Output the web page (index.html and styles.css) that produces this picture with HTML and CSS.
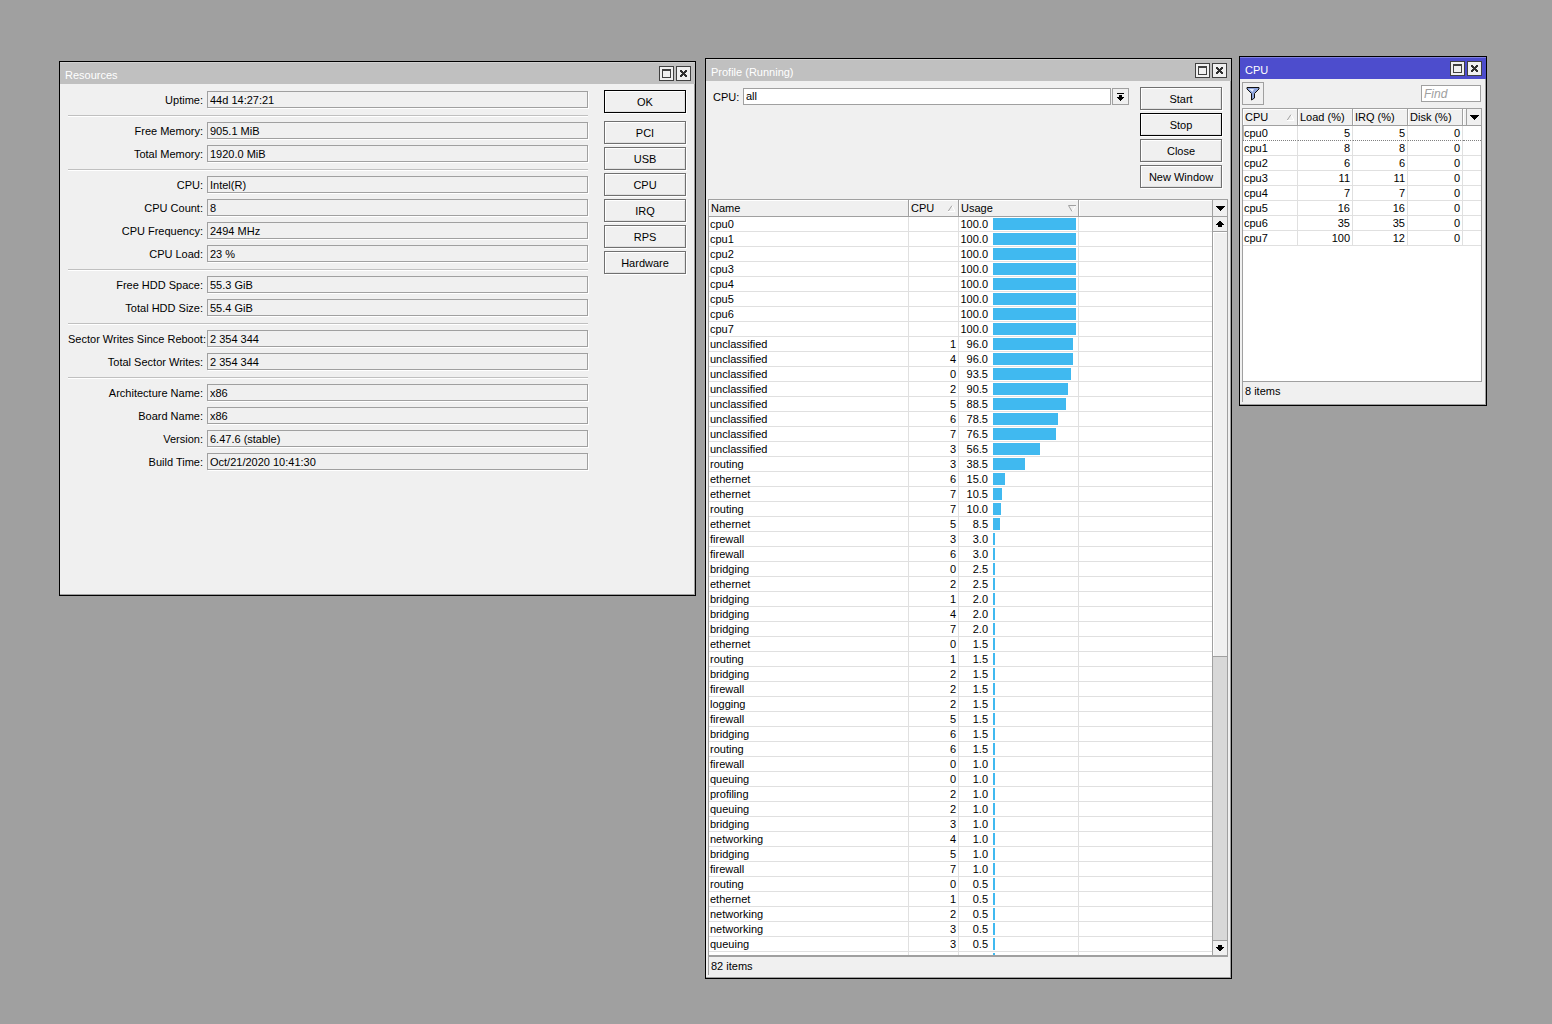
FILE: index.html
```html
<!DOCTYPE html>
<html lang="en">
<head>
<meta charset="utf-8">
<title>Router resources</title>
<link rel="stylesheet" href="styles.css">
</head>
<body>
<svg class="defs" aria-hidden="true">
  <symbol id="i-max" viewBox="0 0 13 13"><path d="M2 2h9v9H2z M3 4v6h7V4z" fill="#404040" fill-rule="evenodd"/></symbol>
  <symbol id="i-close" viewBox="0 0 13 13"><path d="M3 3h2v1h1v1h1V4h1V3h2v2H9v1H8v1h1v1h1v2H8V9H7V8H6v1H5v1H3V8h1V7h1V6H4V5H3z" fill="#303030"/></symbol>
  <symbol id="i-down" viewBox="0 0 9 5"><path d="M0 0h9v1H8v1H7v1H6v1H5v1H4V4H3V3H2V2H1V1H0z"/></symbol>
  <symbol id="i-combo" viewBox="0 0 7 8"><path d="M0 0h7v1H0z M2 2h3v2h2v1H6v1H5v1H4v1H3V7H2V6H1V5H0V4h2z"/></symbol>
  <symbol id="i-arrow" viewBox="0 0 8 6"><path d="M3 0h2v1h1v1h1v1h1v1H6v2H2V4H0V3h1V2h1V1h1z"/></symbol>
</svg>
<main class="desktop">
  <section class="window resources">
    <header class="titlebar">
      <h2>Resources</h2>
      <button class="tb" aria-label="Maximize"><svg><use href="#i-max"/></svg></button>
      <button class="tb" aria-label="Close"><svg><use href="#i-close"/></svg></button>
    </header>
    <div class="res-body">
      <form class="fields">
        <label for="f1">Uptime:</label><input id="f1" readonly value="44d 14:27:21">
        <hr>
        <label for="f2">Free Memory:</label><input id="f2" readonly value="905.1 MiB">
        <label for="f3">Total Memory:</label><input id="f3" readonly value="1920.0 MiB">
        <hr>
        <label for="f4">CPU:</label><input id="f4" readonly value="Intel(R)">
        <label for="f5">CPU Count:</label><input id="f5" readonly value="8">
        <label for="f6">CPU Frequency:</label><input id="f6" readonly value="2494 MHz">
        <label for="f7">CPU Load:</label><input id="f7" readonly value="23 %">
        <hr>
        <label for="f8">Free HDD Space:</label><input id="f8" readonly value="55.3 GiB">
        <label for="f9">Total HDD Size:</label><input id="f9" readonly value="55.4 GiB">
        <hr>
        <label for="f10">Sector Writes Since Reboot:</label><input id="f10" readonly value="2 354 344">
        <label for="f11">Total Sector Writes:</label><input id="f11" readonly value="2 354 344">
        <hr>
        <label for="f12">Architecture Name:</label><input id="f12" readonly value="x86">
        <label for="f13">Board Name:</label><input id="f13" readonly value="x86">
        <label for="f14">Version:</label><input id="f14" readonly value="6.47.6 (stable)">
        <label for="f15">Build Time:</label><input id="f15" readonly value="Oct/21/2020 10:41:30">
      </form>
      <div class="buttons">
        <button class="btn default spaced">OK</button>
        <button class="btn">PCI</button>
        <button class="btn">USB</button>
        <button class="btn">CPU</button>
        <button class="btn">IRQ</button>
        <button class="btn">RPS</button>
        <button class="btn">Hardware</button>
      </div>
    </div>
  </section>

  <section class="window profile">
    <header class="titlebar">
      <h2>Profile (Running)</h2>
      <button class="tb" aria-label="Maximize"><svg><use href="#i-max"/></svg></button>
      <button class="tb" aria-label="Close"><svg><use href="#i-close"/></svg></button>
    </header>
    <div class="prof-top">
      <div class="combo">
        <label for="cpu">CPU:</label>
        <select id="cpu"><option>all</option></select>
        <button class="drop" aria-label="Open list"><svg><use href="#i-combo"/></svg></button>
      </div>
      <div class="buttons">
        <button class="btn">Start</button>
        <button class="btn default">Stop</button>
        <button class="btn">Close</button>
        <button class="btn">New Window</button>
      </div>
    </div>
    <div class="list">
      <div class="pane">
        <table>
          <colgroup><col class="c-name"><col class="c-cpu"><col class="c-usage"><col></colgroup>
          <thead><tr>
            <th>Name</th>
            <th><span class="sort">CPU <svg class="tri" viewBox="0 0 8 7"><path d="M0 6.5L4 .5" stroke="#a0a0a0"/><path d="M4 .5L7 6.5H0" stroke="#fff" fill="none"/></svg></span></th>
            <th><span class="sort">Usage <svg class="tri" viewBox="0 0 8 7"><path d="M8 .5H.5L4 6.5" stroke="#a0a0a0" fill="none"/><path d="M4 6.5L7.5 1" stroke="#fff"/></svg></span></th>
            <th></th>
          </tr></thead>
          <tbody id="rows"></tbody>
        </table>
      </div>
      <div class="side">
        <button class="cols" aria-label="Columns"><svg><use href="#i-down"/></svg></button>
        <button class="sb" aria-label="Scroll up"><svg><use href="#i-arrow"/></svg></button>
        <div class="track"><div class="thumb"></div></div>
        <button class="sb end" aria-label="Scroll down"><svg class="flip"><use href="#i-arrow"/></svg></button>
      </div>
    </div>
    <footer class="status">82 items</footer>
  </section>

  <section class="window cpu active">
    <header class="titlebar">
      <h2>CPU</h2>
      <button class="tb" aria-label="Maximize"><svg><use href="#i-max"/></svg></button>
      <button class="tb" aria-label="Close"><svg><use href="#i-close"/></svg></button>
    </header>
    <div class="tools">
      <button class="filter" aria-label="Filter"><svg viewBox="0 0 14 15"><path d="M1 1.5h12v1.5L8.500 7.500v4.500L5.500 14V7.500L1 3z" fill="#8ea4dc" stroke="#111"/><path d="M3 3h5L6.500 6z" fill="#e4ecff"/></svg></button>
      <input class="find" placeholder="Find" aria-label="Find">
    </div>
    <div class="list">
      <div class="pane">
        <table>
          <colgroup><col class="c-num"><col class="c-num"><col class="c-num"><col class="c-num"><col></colgroup>
          <thead><tr>
            <th><span class="sort">CPU <svg class="tri" viewBox="0 0 8 7"><path d="M0 6.5L4 .5" stroke="#a0a0a0"/><path d="M4 .5L7 6.5H0" stroke="#fff" fill="none"/></svg></span></th>
            <th>Load (%)</th><th>IRQ (%)</th><th>Disk (%)</th>
            <th class="last"><button class="cols" aria-label="Columns"><svg><use href="#i-down"/></svg></button></th>
          </tr></thead>
          <tbody>
            <tr class="focus"><td>cpu0</td><td>5</td><td>5</td><td>0</td><td></td></tr>
            <tr><td>cpu1</td><td>8</td><td>8</td><td>0</td><td></td></tr>
            <tr><td>cpu2</td><td>6</td><td>6</td><td>0</td><td></td></tr>
            <tr><td>cpu3</td><td>11</td><td>11</td><td>0</td><td></td></tr>
            <tr><td>cpu4</td><td>7</td><td>7</td><td>0</td><td></td></tr>
            <tr><td>cpu5</td><td>16</td><td>16</td><td>0</td><td></td></tr>
            <tr><td>cpu6</td><td>35</td><td>35</td><td>0</td><td></td></tr>
            <tr><td>cpu7</td><td>100</td><td>12</td><td>0</td><td></td></tr>
          </tbody>
        </table>
      </div>
    </div>
    <footer class="status">8 items</footer>
  </section>
</main>
<script src="rows.js"></script>
</body>
</html>
```
FILE: styles.css
```css
* { box-sizing: border-box; }

body {
  margin: 0;
  background: #a0a0a0;
  color: #000;
  font: 11px/14px "Liberation Sans", Arial, sans-serif;
}

button, input, select {
  margin: 0;
  padding: 0;
  border: 1px solid #a0a0a0;
  border-radius: 0;
  background: #f0f0f0;
  color: #000;
  font: inherit;
}

.defs { display: none; }

.desktop {
  display: flex;
  align-items: flex-start;
  min-height: 100vh;
  padding: 56px 65px 45px 59px;
}

.window {
  display: flex;
  flex-direction: column;
  min-width: 0;
  border: 1px solid #000;
  background: #f0f0f0;
  box-shadow: inset -1px -1px #a0a0a0;
}
.resources { flex: 635 1 0; min-height: 535px; margin-top: 5px; }
.profile { flex: 525 1 0; height: calc(100vh - 103px); margin: 2px 7px 0 9px; }
.cpu { flex: 246 1 0; min-height: 350px; }

.titlebar {
  display: flex;
  align-items: center;
  gap: 2px;
  height: 22px;
  padding: 2px 4px 0 5px;
  border-top: 1px solid #d0d0d0;
  background: #c0c0c0;
}
.active .titlebar { background: #4d4dcd; border-color: #8080e0; }
.titlebar h2 {
  flex: 1;
  margin: 0;
  color: #fff;
  font-size: 11px;
  font-weight: normal;
}
.tb {
  width: 15px;
  height: 15px;
  margin-bottom: 2px;
  border-color: #404040;
}
.tb svg { display: block; width: 13px; height: 13px; }

.res-body { display: flex; gap: 16px; padding: 6px 9px 8px 8px; }
.fields {
  flex: 1;
  display: grid;
  grid-template-columns: 135px 1fr;
  gap: 6px 4px;
  align-content: start;
  padding-top: 1px;
}
.fields label { height: 17px; line-height: 18px; text-align: right; white-space: nowrap; }
.fields input {
  width: 100%;
  height: 17px;
  padding-left: 2px;
  box-shadow: 1px 1px #fff;
}
.fields hr {
  grid-column: 1 / -1;
  width: 100%;
  height: 1px;
  margin: 1px 0 0;
  border: 0;
  background: #c0c0c0;
  box-shadow: 0 1px #fff;
}

.buttons { display: flex; flex-direction: column; gap: 3px; width: 82px; }
.btn {
  height: 23px;
  border-color: #707070;
  box-shadow: inset 1px 1px #fff, inset -1px -1px #e0e0e0, 1px 1px #fff;
}
.default { border-color: #000; }
.spaced { margin-bottom: 5px; }

.prof-top { display: flex; gap: 11px; padding: 6px 9px 11px 7px; }
.combo { flex: 1; display: flex; align-items: flex-start; gap: 1px; padding-top: 1px; }
.combo label { width: 29px; line-height: 18px; }
.combo select {
  flex: 1;
  height: 17px;
  padding: 0 0 1px 2px;
  appearance: none;
  background: #fff;
}
.drop { display: grid; place-items: center; width: 17px; height: 17px; }
.drop svg { width: 7px; height: 8px; }

.list {
  flex: 1;
  display: flex;
  min-height: 0;
  margin: 0 4px 0 2px;
  border: 1px solid #a0a0a0;
  background: #fff;
}
.profile .list { border-bottom-width: 2px; margin-right: 3px; }
.pane { flex: 1; overflow: hidden; }

table { width: 100%; border-collapse: separate; border-spacing: 0; table-layout: fixed; }
.c-name { width: 200px; }
.c-cpu { width: 50px; }
.c-usage { width: 120px; }
.c-num { width: 55px; }
th {
  height: 17px;
  padding: 0 2px;
  border: solid #a0a0a0;
  border-width: 0 1px 1px 0;
  background: #f0f0f0;
  box-shadow: inset 1px 1px #fff;
  font-weight: normal;
  line-height: 16px;
  text-align: left;
  white-space: nowrap;
}
td {
  height: 15px;
  padding: 0 2px 0 1px;
  border: solid #e0e0e0;
  border-width: 0 1px 1px 0;
  text-align: right;
  white-space: nowrap;
}
td:first-child { text-align: left; }
th:last-child, td:last-child { border-right: 0; }
.sort { display: flex; justify-content: space-between; align-items: center; }
.tri { width: 8px; height: 7px; }
.usage { display: flex; align-items: center; gap: 5px; }
.usage span { width: 28px; }
.meter { flex: 1; height: 12px; }
.meter div { min-width: 2px; height: 12px; background: #40b9f0; }

.side { display: flex; flex-direction: column; width: 15px; border-left: 1px solid #a0a0a0; }
.cols, .sb { display: grid; place-items: center; border: 0; }
.side .cols { height: 17px; border-bottom: 1px solid #a0a0a0; }
.cols svg { width: 9px; height: 5px; }
.sb { height: 15px; border-bottom: 1px solid #a0a0a0; }
.sb.end { border-top: 1px solid #a0a0a0; border-bottom: 0; }
.sb svg { width: 8px; height: 6px; }
.sb .flip { transform: rotate(180deg); }
.track { flex: 1; background: #d8d8d8; }
.thumb { height: 60%; border-bottom: 1px solid #a0a0a0; background: #f0f0f0; box-shadow: inset 1px 1px #fff; }

.status {
  height: 20px;
  margin: 0 4px 3px 2px;
  padding-left: 2px;
  border-left: 1px solid #a0a0a0;
  line-height: 18px;
}
.profile .status { height: 18px; }

.tools { display: flex; justify-content: space-between; align-items: center; padding: 3px 5px 3px 2px; }
.filter { display: grid; place-items: center; width: 22px; height: 23px; }
.filter svg { width: 14px; height: 15px; }
.find { width: 60px; height: 17px; padding-left: 2px; background: #fff; font-size: 12px; }
.find::placeholder { color: #a0a0a0; font-style: italic; }
.last { padding: 0 0 0 3px; }
.last .cols { width: 100%; height: 16px; border-left: 1px solid #a0a0a0; }
.focus td { border-bottom: 1px dotted #808080; }
.focus td:first-child { box-shadow: inset 1px 0 #c0c0c0; }
```
FILE: rows.js
```js
// Each entry: task name, CPU number (blank for a core's total), usage in percent.
const data = `cpu0,,100.0
cpu1,,100.0
cpu2,,100.0
cpu3,,100.0
cpu4,,100.0
cpu5,,100.0
cpu6,,100.0
cpu7,,100.0
unclassified,1,96.0
unclassified,4,96.0
unclassified,0,93.5
unclassified,2,90.5
unclassified,5,88.5
unclassified,6,78.5
unclassified,7,76.5
unclassified,3,56.5
routing,3,38.5
ethernet,6,15.0
ethernet,7,10.5
routing,7,10.0
ethernet,5,8.5
firewall,3,3.0
firewall,6,3.0
bridging,0,2.5
ethernet,2,2.5
bridging,1,2.0
bridging,4,2.0
bridging,7,2.0
ethernet,0,1.5
routing,1,1.5
bridging,2,1.5
firewall,2,1.5
logging,2,1.5
firewall,5,1.5
bridging,6,1.5
routing,6,1.5
firewall,0,1.0
queuing,0,1.0
profiling,2,1.0
queuing,2,1.0
bridging,3,1.0
networking,4,1.0
bridging,5,1.0
firewall,7,1.0
routing,0,0.5
ethernet,1,0.5
networking,2,0.5
networking,3,0.5
queuing,3,0.5
ethernet,4,0.5`;

document.getElementById("rows").innerHTML = data.split("\n").map((line) => {
  const [name, cpu, usage] = line.split(",");
  return `<tr><td>${name}</td><td>${cpu}</td><td><div class="usage"><span>${usage}</span><div class="meter"><div style="width:${usage}%"></div></div></div></td><td></td></tr>`;
}).join("");
```
